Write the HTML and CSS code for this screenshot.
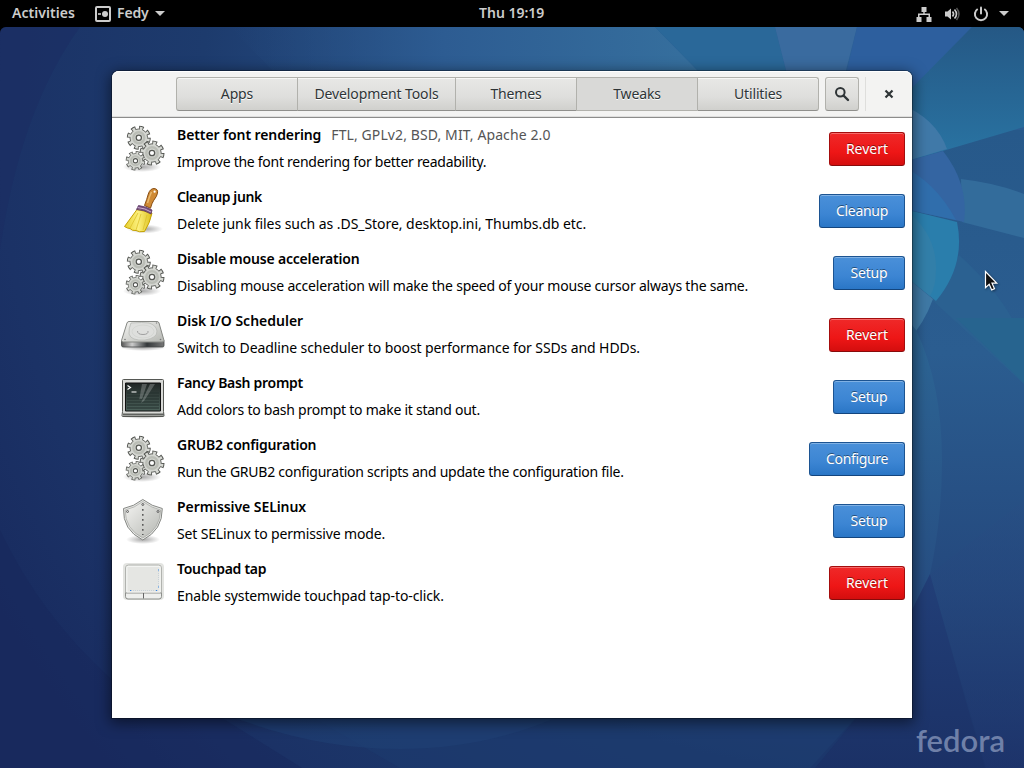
FILE: index.html
```html
<!DOCTYPE html>
<html lang="en">
<head>
<meta charset="utf-8">
<title>Fedy</title>
<link rel="stylesheet" href="styles.css">
</head>
<body>
<svg class="wallpaper" viewBox="0 0 1024 768" aria-hidden="true">
  <defs>
    <radialGradient id="base" gradientUnits="userSpaceOnUse" cx="850" cy="120" r="1000"><stop offset="0" stop-color="#2d6399"/><stop offset=".4" stop-color="#28548a"/><stop offset=".65" stop-color="#1d3b6d"/><stop offset=".85" stop-color="#1b3266"/><stop offset="1" stop-color="#182a5e"/></radialGradient>
    <linearGradient id="sky" x1="0" y1="0" x2="1" y2="0"><stop offset="0" stop-color="#254b7e" stop-opacity="0"/><stop offset=".45" stop-color="#2d5c92"/><stop offset="1" stop-color="#36709e"/></linearGradient>
    <linearGradient id="teal" x1="0" y1="0" x2="0" y2="1"><stop offset="0" stop-color="#255885"/><stop offset="1" stop-color="#2974a3"/></linearGradient>
    <linearGradient id="right" x1="0" y1="0" x2="0" y2="1"><stop offset="0" stop-color="#27598a"/><stop offset=".35" stop-color="#2b5d90"/><stop offset=".72" stop-color="#24487d"/><stop offset="1" stop-color="#1b3268"/></linearGradient>
    <linearGradient id="arc" x1="0" y1="0" x2="0" y2="1"><stop offset="0" stop-color="#2d6695"/><stop offset="1" stop-color="#264b80"/></linearGradient>
    <linearGradient id="wedge" x1="0" y1="0" x2="0" y2="1"><stop offset="0" stop-color="#223f78"/><stop offset="1" stop-color="#1b3166"/></linearGradient>
    <linearGradient id="low" x1="0" y1="0" x2="0" y2="1"><stop offset="0" stop-color="#284f84"/><stop offset="1" stop-color="#1f356d"/></linearGradient>
  </defs>
  <path fill="url(#base)" d="M0 0h1024v768H0z"/>
  <path fill="#17275b" opacity=".5" d="M0 530Q40 615 112 680l110 38 80 50H0z"/>
  <path fill="#1b2b61" opacity=".4" d="M0 27h80Q20 110 0 250z"/>
  <path fill="url(#sky)" d="M230 27h425l50 51H280z"/>
  <path fill="#2a6899" d="M655 27h120l14 55h-80z"/>
  <path fill="#3a6b9f" d="M775 27h82l-14 55h-54z"/>
  <path fill="#2d5f9e" d="M857 27h115l-60 61h-69z"/>
  <path fill="url(#right)" d="M860 130h164v638H860z"/>
  <path fill="url(#teal)" d="M972 27h52v100l-112 33V88z"/>
  <path fill="#4079a8" d="M900 104Q936 118 947 149l-47 14z"/>
  <path fill="#336c9b" d="M961 179q35 4 63 15v44l-62-16z"/>
  <path fill="#3465a2" d="M900 163l43-12q26 33 21 71l-64-14z"/>
  <path fill="#306eac" d="M900 165q35 16 56 55l-56-12z"/>
  <path fill="#2b6191" d="M959 255q42 38 59 75l6 8v46l-92-84z"/>
  <path fill="#27648f" d="M956 318h68v65z"/>
  <path fill="#2a7eac" d="M900 208l57 14q9 43-21 79l-36-29z"/>
  <path fill="#327fa9" d="M907 211q30 24 29 59 0 17-6 26l-30-24z"/>
  <path fill="#3f79a5" d="M900 272l33 27q-9 25-26 43z"/>
  <path fill="url(#arc)" d="M916 330q26 54 26 131 0 58-12 113l-18 50V325z"/>
  <path fill="url(#low)" d="M930 574l8 26 48 168h38V500z" opacity=".5"/>
  <path fill="url(#wedge)" d="M930 574l13 46 42 148H810l50-55z"/>
  <path fill="#1c3a6e" d="M300 710h563l-48 58H400z" opacity=".6"/>
  <path fill="#1f4175" opacity=".5" d="M230 716q85 33 170 33t160-33z"/>
</svg>

<header class="topbar">
  <div class="topbar-left">
    <span class="activities">Activities</span>
    <span class="appmenu">
      <svg width="16" height="16" viewBox="0 0 16 16"><rect x="1" y="1" width="14" height="14" rx="1" fill="none" stroke="#ccc" stroke-width="2"/><path d="M3 7.2h3v1.6H3z" fill="#ccc"/><circle cx="10" cy="8" r="3" fill="#ccc"/></svg>
      <span class="appname">Fedy</span>
      <i class="caret"></i>
    </span>
  </div>
  <span class="clock">Thu 19:19</span>
  <div class="status">
    <svg width="16" height="16" viewBox="0 0 16 16" fill="#ccc"><path d="M5.500 1h5v5H8.700v1.500H14V11h1.500v5h-5v-5h2V9H3.500v2h2v5h-5v-5H2V7.500h5.300V6H5.500z"/></svg>
    <svg width="16" height="16" viewBox="0 0 16 16"><path d="M1 5.500h2.500L7 2.500v11l-3.500-3H1z" fill="#ccc"/><path d="M8.500 5.500q2.200 2.500 0 5M10.500 3.500q4 4.500 0 9" fill="none" stroke="#ccc" stroke-width="1.600"/><path d="M12.500 2q5 6 0 12" fill="none" stroke="#555" stroke-width="1.500"/></svg>
    <svg class="power" width="16" height="16" viewBox="0 0 16 16" fill="none" stroke="#ccc" stroke-width="2"><path d="M4.700 3A6.100 6.100 0 1 0 11.300 3"/><path d="M8 1.500v6" stroke-linecap="round"/></svg>
    <i class="caret"></i>
  </div>
</header>

<main class="window">
  <div class="headerbar">
    <nav class="tabs">
      <button class="tab">Apps</button>
      <button class="tab wide">Development Tools</button>
      <button class="tab">Themes</button>
      <button class="tab active">Tweaks</button>
      <button class="tab">Utilities</button>
    </nav>
    <button class="search"><svg width="16" height="16" viewBox="0 0 16 16" fill="none" stroke="#2e3436"><circle cx="6.300" cy="6.300" r="4.300" stroke-width="2"/><path d="M9.500 9.500L14 14" stroke-width="2.400" stroke-linecap="round"/></svg></button>
    <i class="separator"></i>
    <button class="close"><svg width="10" height="10" viewBox="0 0 10 10"><path d="M1.500 1.500l7 7m0-7l-7 7" stroke="#2e3436" stroke-width="2.200"/></svg></button>
  </div>

  <svg class="defs" width="0" height="0">
    <defs>
      <linearGradient id="metal" x1="0" y1="0" x2="1" y2="1"><stop offset="0" stop-color="#f4f4f2"/><stop offset="1" stop-color="#b5b7b2"/></linearGradient>
      <radialGradient id="shade"><stop offset="0" stop-color="#000" stop-opacity=".35"/><stop offset="1" stop-color="#000" stop-opacity="0"/></radialGradient>
      <symbol id="gear" viewBox="-13 -13 26 26">
        <circle r="10" fill="none" stroke="#555753" stroke-width="5" stroke-dasharray="4.400 3.454"/>
        <circle r="9.200" fill="#d3d5d0" stroke="#666864"/>
        <circle r="9.700" fill="none" stroke="#d6d8d3" stroke-width="3.600" stroke-dasharray="2.600 5.018" stroke-dashoffset="-.850"/>
        <circle r="5.700" fill="none" stroke="#babdb6" stroke-width="2.500"/>
        <circle r="2.700" fill="#fff" stroke="#555753" stroke-width="1.300"/>
      </symbol>
      <symbol id="gears" viewBox="0 0 48 48">
        <ellipse cx="23" cy="42" rx="19" ry="5" fill="url(#shade)"/>
        <use href="#gear" x="7.300" y=".3" width="25" height="25"/>
        <use href="#gear" x="20" y="15" width="26" height="26"/>
        <use href="#gear" x="6.200" y="25.500" width="20.500" height="20.500"/>
      </symbol>
    </defs>
  </svg>

  <ul class="list">
    <li class="row">
      <svg class="icon" viewBox="0 0 48 48"><use href="#gears"/></svg>
      <div class="text fonts"><h2>Better font rendering<span class="license">FTL, GPLv2, BSD, MIT, Apache 2.0</span></h2><p>Improve the font rendering for better readability.</p></div>
      <button class="action revert">Revert</button>
    </li>
    <li class="row">
      <svg class="icon" viewBox="0 0 48 48">
        <defs><linearGradient id="straw" x1="0" y1="0" x2="1" y2="0"><stop offset="0" stop-color="#e6cf2e"/><stop offset=".5" stop-color="#fcf07d"/><stop offset="1" stop-color="#ddc01d"/></linearGradient></defs>
        <ellipse cx="26" cy="42" rx="18" ry="4.500" fill="url(#shade)"/>
        <path d="M25.500 18.500Q28 12 29.300 7 31 1.600 35 1.500q4.300.3 3.500 4.700-.5 3-3.700 7-2 3-3.300 8z" fill="#cf8a35" stroke="#8a4e12"/>
        <path d="M28.500 16q2-7 4-11" stroke="#e9b96e" stroke-width="1.500" fill="none"/>
        <circle cx="35.600" cy="4.700" r="1.100" fill="#fff"/>
        <path d="M18 22.500L5.500 39.500q3 2 5.500 2 2 2.500 6 2 3 2 8.500 1Q31 36 33 26z" fill="url(#straw)" stroke="#c4a000"/>
        <path d="M19 26L11 41m11-14l-5 16m11-15l-4 15" stroke="#dcc22c" fill="none" stroke-width=".8"/>
        <path d="M19.500 18.500q8 1 13.500 4.500l-1 4Q25 22.500 17.500 22.500z" fill="#75507b" stroke="#5c3566" stroke-width=".8"/><path d="M18.500 20.500q8 .7 13.500 4.500" stroke="#c9aad0" fill="none"/>
      </svg>
      <div class="text junk"><h2>Cleanup junk</h2><p>Delete junk files such as .DS_Store, desktop.ini, Thumbs.db etc.</p></div>
      <button class="action cleanup">Cleanup</button>
    </li>
    <li class="row">
      <svg class="icon" viewBox="0 0 48 48"><use href="#gears"/></svg>
      <div class="text mouse"><h2>Disable mouse acceleration</h2><p>Disabling mouse acceleration will make the speed of your mouse cursor always the same.</p></div>
      <button class="action">Setup</button>
    </li>
    <li class="row">
      <svg class="icon" viewBox="0 0 48 48">
        <defs><linearGradient id="side" x1="0" y1="0" x2="1" y2="0"><stop offset="0" stop-color="#555"/><stop offset=".25" stop-color="#ccc"/><stop offset=".6" stop-color="#34383a"/><stop offset="1" stop-color="#777"/></linearGradient></defs>
        <ellipse cx="24" cy="36.500" rx="23" ry="3.500" fill="url(#shade)"/>
        <path d="M2.500 29.500h42.500v5q0 1.500-1.500 1.500h-39q-2 0-2-1.500z" fill="url(#side)" stroke="#444846" stroke-width=".8"/>
        <path d="M10 10.500h28q1.500 0 2 1.500l5 17.500q0 1.500-2 1.500H4.500q-2 0-2-1.500L8 12q.5-1.500 2-1.500z" fill="url(#metal)" stroke="#858783"/>
        <path d="M12 12q12-1 18 0 7 2 8 8 .5 7-12 9-14 1-16-6-.3-6 2-11z" fill="#dedfdd" stroke="#b8bab6" stroke-width=".8"/>
        <ellipse cx="24" cy="20.500" rx="11" ry="6.500" fill="none" stroke="#d0d2ce" stroke-width=".7"/>
        <path d="M18.500 20q0 3.500 5.500 3.500t5-3.500" fill="none" stroke="#999" stroke-width=".9"/>
        <circle cx="6" cy="28.500" r=".8" fill="#777"/><circle cx="41.500" cy="28.500" r=".8" fill="#777"/><circle cx="37.500" cy="12" r=".7" fill="#888"/>
      </svg>
      <div class="text disk"><h2>Disk I/O Scheduler</h2><p>Switch to Deadline scheduler to boost performance for SSDs and HDDs.</p></div>
      <button class="action revert">Revert</button>
    </li>
    <li class="row">
      <svg class="icon" viewBox="0 0 48 48">
        <defs><linearGradient id="screen" x1="0" y1="0" x2="0" y2="1"><stop offset="0" stop-color="#202625"/><stop offset="1" stop-color="#4c625b"/></linearGradient></defs>
        <ellipse cx="24" cy="43" rx="24" ry="3" fill="url(#shade)"/>
        <path d="M4.500 6.500h39q1 0 1 1v31l.5 4q0 1-1 1h-40q-1 0-1-1l.5-4v-31q0-1 1-1z" fill="#d9dad7" stroke="#555753"/>
        <path d="M4 41.500h41" stroke="#60625f" stroke-width="2"/>
        <path d="M6.500 10h35v28h-35z" fill="url(#screen)" stroke="#111"/>
        <path d="M8 20h32M8 23h32M8 26h32M8 29h32M8 32h32M8 35h32" stroke="#24312e"/>
        <path d="M23 11h5l-5 15q-3-1-3 2zm8 0h5l-11 17-3 2z" fill="#fff" opacity=".22"/>
        <path d="M8.500 12.500l3 2-3 2M12.500 19h5" fill="none" stroke="#fff" stroke-width="1.200"/>
      </svg>
      <div class="text bash"><h2>Fancy Bash prompt</h2><p>Add colors to bash prompt to make it stand out.</p></div>
      <button class="action">Setup</button>
    </li>
    <li class="row">
      <svg class="icon" viewBox="0 0 48 48"><use href="#gears"/></svg>
      <div class="text grub"><h2>GRUB2 configuration</h2><p>Run the GRUB2 configuration scripts and update the configuration file.</p></div>
      <button class="action configure">Configure</button>
    </li>
    <li class="row">
      <svg class="icon" viewBox="0 0 48 48">
        <ellipse cx="24" cy="42.500" rx="17" ry="4.500" fill="url(#shade)"/>
        <path d="M23.800 2.500Q33 9.500 43.300 11.500 43.500 33 23.800 43 3.500 33 4.500 11.500 15 9.500 23.800 2.500z" fill="#e8e9e7" stroke="#858783"/>
        <path d="M23.800 4.500Q33 11.200 41.700 13 41.200 32 23.800 41 6 32 6.200 13 15.500 11 23.800 4.500z" fill="url(#metal)" stroke="#a2a49f" stroke-width=".7"/>
        <path d="M23.800 12v26" stroke="#555" stroke-width="1.500" stroke-dasharray="1.700 3.300"/>
        <g fill="#d8d9d7" stroke="#555" stroke-width=".9"><circle cx="23.800" cy="7.500" r="1"/><circle cx="8.500" cy="14.500" r="1"/><circle cx="39" cy="14.500" r="1"/></g>
      </svg>
      <div class="text selinux"><h2>Permissive SELinux</h2><p>Set SELinux to permissive mode.</p></div>
      <button class="action">Setup</button>
    </li>
    <li class="row">
      <svg class="icon" viewBox="0 0 48 48">
        <rect x="4" y="4" width="41" height="37" rx="4" fill="#dcddda" opacity=".8"/>
        <rect x="6.500" y="6" width="36" height="33.500" rx="3" fill="#eceeeb" stroke="#b1b3af"/>
        <path d="M6.500 34h36v3.500q0 2.500-2.500 2.500H9q-2.500 0-2.500-2.500z" fill="#eeefed" stroke="#8d8f8b"/>
        <path d="M24.500 34v5.500" stroke="#666"/><path d="M8 7.500h33v25.500H8z" fill="#e5e6e3" stroke="#f3f4f2"/>
        <path d="M12 31.500h25M39.500 12v16" stroke="#c9d2d8" stroke-dasharray="1 1"/>
        <path d="M11 31h1.200v1H11zM37 31h1.200v1H37zM39 10.500h1v1h-1zM39 27.500h1v1h-1z" fill="#3584e4"/>
      </svg>
      <div class="text touchpad"><h2>Touchpad tap</h2><p>Enable systemwide touchpad tap-to-click.</p></div>
      <button class="action revert">Revert</button>
    </li>
  </ul>
</main>

<div class="brand">fedora</div>
<svg class="cursor" width="16" height="24" viewBox="0 0 16 24"><path d="M1.500 1.500v16.200l3.700-3.500 2.500 5.700 2.800-1.200-2.500-5.500h4.700z" fill="#111" stroke="#fff" stroke-width="1.200"/></svg>
</body>
</html>
```
FILE: styles.css
```css
* { box-sizing: border-box; }

body {
  margin: 0;
  width: 1024px;
  height: 768px;
  overflow: hidden;
  position: relative;
  background: #000;
  font-family: "Noto Sans", "Open Sans", sans-serif;
  font-size: 14px;
  letter-spacing: -0.15px;
}

button { font: inherit; letter-spacing: inherit; padding: 0; }

h2, p, ul { margin: 0; padding: 0; }

.wallpaper {
  position: absolute;
  inset: 0;
  width: 1024px;
  height: 768px;
  clip-path: inset(27px 0 0 0 round 6px 6px 0 0);
}

.topbar {
  position: relative;
  display: grid;
  grid-template-columns: 1fr auto 1fr;
  align-items: center;
  height: 27px;
  padding: 0 15px 0 12px;
  color: #ccc;
  font-weight: 600;
}

.topbar-left, .appmenu, .status { display: flex; align-items: center; }
.topbar-left { gap: 20px; }
.activities { width: 63px; white-space: nowrap; letter-spacing: 0.05px; }
.activities, .appname, .clock { padding-bottom: 2px; }
.appname { width: 33px; margin: 0 5px 0 6px; }
.clock { width: 66px; margin-right: -3px; white-space: nowrap; letter-spacing: 0; }
.status { justify-content: flex-end; gap: 12px; }
.status .power { margin: 0 -2px 0 1px; }

.caret {
  border: 5px solid transparent;
  border-top-color: #ccc;
  border-bottom: 0;
}

.window {
  position: relative;
  width: 800px;
  height: 647px;
  margin: 44px 0 0 112px;
  border-radius: 7px 7px 0 0;
  background: #fff;
  box-shadow: 0 0 0 1px rgba(0, 0, 0, .3), 0 3px 14px 2px rgba(0, 0, 0, .5);
}

.headerbar {
  display: flex;
  align-items: center;
  height: 47px;
  padding-left: 64px;
  border-radius: 7px 7px 0 0;
  border-bottom: 1px solid #8c8c8b;
  background: #f3f3f2;
  box-shadow: inset 0 1px #fff, inset 0 -1px #dededd;
}

.tabs { display: flex; width: 643px; }

.tab, .search {
  height: 34px;
  border: 1px solid #b1b1ac;
  border-bottom-color: #8f8f8c;
  background: linear-gradient(#e8e8e6, #dededc 60%, #d0d0cd);
  box-shadow: inset 0 1px #f7f7f6;
  color: #2e3436;
  text-shadow: 0 1px #fff;
}

.tab { width: 121px; padding-bottom: 2px; border-right: 0; white-space: nowrap; }
.tab.wide { width: 158px; letter-spacing: -0.1px; }
.tab:first-child { border-radius: 3px 0 0 3px; }
.tab:last-child { width: 122px; border-right: 1px solid #b1b1ac; border-radius: 0 3px 3px 0; }
.tab.active { background: #d9d9d7; box-shadow: none; border-bottom-color: #b1b1ac; }

.search { width: 34px; margin-left: 6px; border-radius: 3px; display: grid; place-items: center; }
.separator { width: 1px; height: 34px; margin-left: 6px; background: #dededc; }
.close { width: 46px; height: 34px; border: 0; background: none; display: grid; place-items: center; }

.defs { position: absolute; }
.list { list-style: none; }

.row {
  display: flex;
  align-items: center;
  height: 62px;
  padding: 0 7px;
}

.icon { width: 48px; height: 48px; flex: none; }
.text { flex: 1; margin-left: 10px; padding-bottom: 2px; color: #000; white-space: nowrap; }
.text h2 { font-size: 14px; font-weight: 600; line-height: 27px; }
.text p { line-height: 27px; }
.text .license { margin-left: 10px; color: #555; font-weight: 400; letter-spacing: 0.1px; }

.fonts h2 { letter-spacing: -0.1px; }
.fonts p { letter-spacing: -0.27px; }
.junk h2 { letter-spacing: -0.4px; }
.junk p { letter-spacing: -0.05px; }
.mouse h2 { letter-spacing: -0.19px; }
.mouse p { letter-spacing: -0.2px; }
.disk h2 { letter-spacing: 0; }
.disk p { letter-spacing: -0.1px; }
.bash h2 { letter-spacing: -0.3px; }
.bash p { letter-spacing: -0.25px; }
.grub h2 { letter-spacing: -0.2px; }
.grub p { letter-spacing: -0.25px; }
.selinux h2 { letter-spacing: -0.07px; }
.touchpad h2 { letter-spacing: -0.27px; }
.touchpad p { letter-spacing: -0.12px; }

.action {
  width: 72px;
  height: 34px;
  padding: 0 0 2px;
  border: 1px solid #1c5492;
  border-bottom-color: #13457e;
  border-radius: 3px;
  background: linear-gradient(#4a90d9, #3c85d3 60%, #2a76c6);
  box-shadow: inset 0 1px #80b1e4;
  color: #fff;
  text-shadow: 0 -1px rgba(0, 0, 0, .45);
}

.action.cleanup { width: 86px; letter-spacing: -0.3px; }
.action.configure { width: 96px; letter-spacing: -0.35px; }

.action.revert {
  width: 76px;
  letter-spacing: 0;
  border-color: #a50d0d;
  border-bottom-color: #880b0b;
  background: linear-gradient(#ef2929, #ee1616 60%, #d40e0e);
  box-shadow: inset 0 1px #f66b6b;
}

.brand {
  position: absolute;
  left: 916px;
  top: 720px;
  font: 600 31px/40px "Lato", sans-serif;
  letter-spacing: 0;
  color: #6f80a8;
}

.cursor { position: absolute; left: 984px; top: 270px; filter: drop-shadow(1px 1px 1px rgba(0, 0, 0, .4)); }
```
